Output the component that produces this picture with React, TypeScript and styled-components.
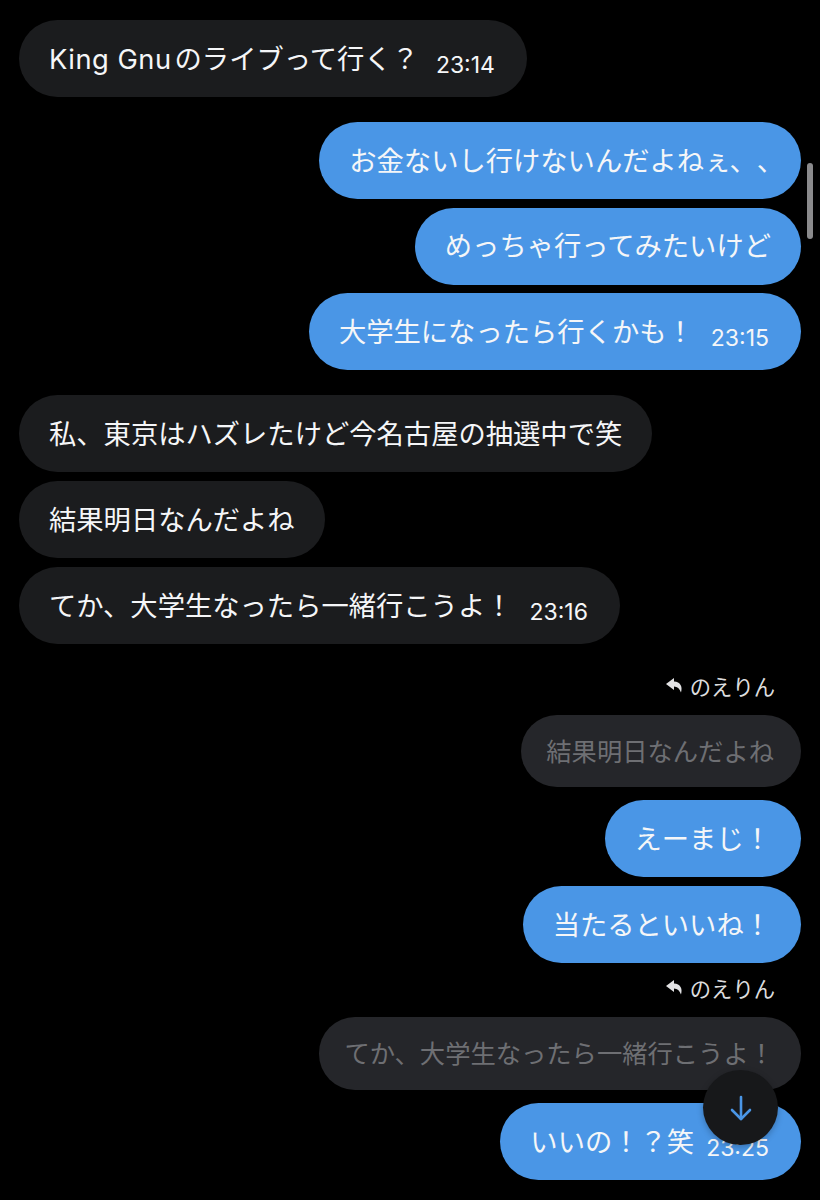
import React from 'react'
import styled, { createGlobalStyle } from 'styled-components'

const GlobalStyle = createGlobalStyle`
  html, body {
    margin: 0;
    padding: 0;
    height: 100%;
    background: #000;
  }
`

const ReplyIcon = () => (
  <svg width="17" height="15" viewBox="0 0 17 15" aria-hidden="true">
    <path d="M8 0 L0 6 L8 12 L8 8.4 C11.4 8.4 13.6 10.4 15 14.6 C16.8 8.6 14.4 4 8 3.6 Z" fill="#e2e2e4" />
  </svg>
)

const DownIcon = () => (
  <svg width="24" height="26" viewBox="0 0 24 26" fill="none" stroke="#4a96e6" strokeWidth="2.6" strokeLinecap="round" strokeLinejoin="round" aria-hidden="true">
    <path d="M12 2 V24" />
    <path d="M3 15 L12 24 L21 15" />
  </svg>
)

const App: React.FC = () => {
  return (
    <Screen>
      <GlobalStyle />
      <Thread>
        <Group>
          <Bubble>
            <BubbleText><Latin>King Gnu</Latin>のライブって行く？</BubbleText>
            <Time>23:14</Time>
          </Bubble>
        </Group>
        <Group $mine $tight>
          <Bubble $mine>
            <BubbleText>お金ないし行けないんだよね<Tucked $by={2}>ぇ</Tucked>、<Tucked $by={13}>、</Tucked></BubbleText>
          </Bubble>
          <Bubble $mine>
            <BubbleText>めっちゃ行ってみたいけど</BubbleText>
          </Bubble>
          <Bubble $mine>
            <BubbleText>大学生になったら行くかも！</BubbleText>
            <Time>23:15</Time>
          </Bubble>
        </Group>
        <Group>
          <Bubble>
            <BubbleText>私、東京はハズレたけど今名古屋の抽選中で笑</BubbleText>
          </Bubble>
          <Bubble>
            <BubbleText>結果明日なんだよね</BubbleText>
          </Bubble>
          <Bubble>
            <BubbleText>てか、大学生なったら一緒行こうよ！</BubbleText>
            <Time>23:16</Time>
          </Bubble>
        </Group>
        <ReplyGroup>
          <ReplyLabel>
            <ReplyIcon />
            のえりん
          </ReplyLabel>
          <Quote $height={72}>結果明日なんだよね</Quote>
          <Group $mine>
            <Bubble $mine>
              <BubbleText>えーまじ！</BubbleText>
            </Bubble>
            <Bubble $mine>
              <BubbleText>当たるといいね！</BubbleText>
            </Bubble>
          </Group>
        </ReplyGroup>
        <ReplyGroup $tight>
          <ReplyLabel>
            <ReplyIcon />
            のえりん
          </ReplyLabel>
          <Quote $height={73}>てか、大学生なったら一緒行こうよ！</Quote>
          <Group $mine>
            <Bubble $mine>
              <BubbleText>いいの！？笑</BubbleText>
              <Time $gap={12}>23:25</Time>
            </Bubble>
          </Group>
        </ReplyGroup>
      </Thread>
      <ScrollThumb />
      <ScrollDown aria-label="scroll to latest">
        <DownIcon />
      </ScrollDown>
    </Screen>
  )
}

const Screen = styled.div`
  position: relative;
  width: 820px;
  height: 1200px;
  overflow: hidden;
  background: #000;
  font-family: Inter, "Noto Sans CJK JP", sans-serif;
  color: #f5f6f8;
  text-spacing-trim: space-all;
`
const Thread = styled.div`
  display: flex;
  flex-direction: column;
  gap: 25px;
  padding: 20px 19px;
`
const Group = styled.div<{ $mine?: boolean; $tight?: boolean }>`
  display: flex;
  flex-direction: column;
  gap: ${(p) => (p.$tight ? '8.5px' : '9px')};
  align-items: ${(p) => (p.$mine ? 'flex-end' : 'flex-start')};
`
const ReplyGroup = styled.div<{ $tight?: boolean }>`
  display: flex;
  flex-direction: column;
  align-items: flex-end;
  margin-top: ${(p) => (p.$tight ? '-14px' : '3px')};
`
const ReplyLabel = styled.div`
  display: flex;
  align-items: center;
  gap: 7px;
  height: 28px;
  box-sizing: border-box;
  padding-bottom: 2px;
  margin: 0 26px 15px 0;
  font-size: 21.3px;
  color: #dcdcde;
`
const Bubble = styled.div<{ $mine?: boolean }>`
  display: flex;
  align-items: center;
  height: 77px;
  padding: 0 30px;
  box-sizing: border-box;
  border-radius: 38.5px;
  background: ${(p) => (p.$mine ? '#4a96e6' : '#1b1c1e')};
`
const BubbleText = styled.span`
  margin-top: 2px;
  font-size: 27.3px;
  line-height: 1;
  white-space: nowrap;
`
const Latin = styled.span`
  margin-right: 3px;
  letter-spacing: 0.5px;
`
const Tucked = styled.span<{ $by: number }>`
  letter-spacing: ${(p) => -p.$by}px;
`
const Time = styled.span<{ $gap?: number }>`
  margin: 14px 2px 0 ${(p) => p.$gap ?? 17}px;
  font-size: 23px;
  line-height: 1;
  white-space: nowrap;
`
const Quote = styled.div<{ $height: number }>`
  display: flex;
  align-items: center;
  height: ${(p) => p.$height}px;
  box-sizing: border-box;
  margin-bottom: 13px;
  padding: 0 27px 3px 25px;
  border-radius: 36px;
  background: #25262a;
  color: #6e6f73;
  font-size: 25.3px;
  white-space: nowrap;
`
const ScrollThumb = styled.div`
  position: absolute;
  top: 163px;
  right: 7px;
  width: 6px;
  height: 76px;
  border-radius: 3px;
  background: #8a8a8c;
`
const ScrollDown = styled.button`
  position: absolute;
  top: 1070px;
  left: 703px;
  display: flex;
  align-items: center;
  justify-content: center;
  width: 75px;
  height: 75px;
  padding: 0;
  border: none;
  border-radius: 50%;
  background: #17181a;
  box-shadow: 0 2px 6px rgba(0, 0, 0, 0.25);
`

export default App
